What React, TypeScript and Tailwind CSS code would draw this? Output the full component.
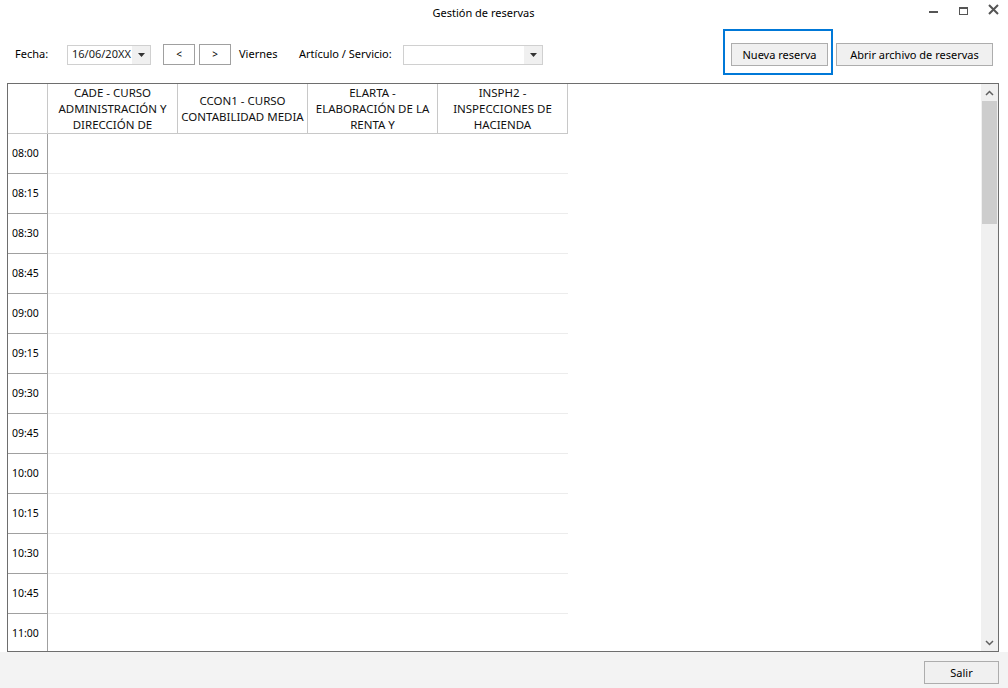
import React from "react";

const columns: string[][] = [
  ["CADE - CURSO", "ADMINISTRACIÓN Y", "DIRECCIÓN DE"],
  ["CCON1 - CURSO", "CONTABILIDAD MEDIA"],
  ["ELARTA -", "ELABORACIÓN DE LA", "RENTA Y"],
  ["INSPH2 -", "INSPECCIONES DE", "HACIENDA"],
];

const times = [
  "08:00", "08:15", "08:30", "08:45", "09:00", "09:15", "09:30",
  "09:45", "10:00", "10:15", "10:30", "10:45", "11:00",
];

function Caret() {
  return (
    <svg width="7" height="4" viewBox="0 0 7 4" className="fill-[#333]">
      <path d="M0 0h7L3.5 4z" />
    </svg>
  );
}

function Combo({ width, value }: { width: string; value?: string }) {
  return (
    <div className={`flex h-[20px] border border-[#d0d0d0] bg-white ${width}`}>
      <div className="flex-1 pl-[4px] text-[11px] leading-[16px] text-[#1a1a1a]">{value}</div>
      <div className="flex w-[18px] items-center justify-center bg-[#f0f0f0]">
        <Caret />
      </div>
    </div>
  );
}

function WinButton({ children, className }: { children: React.ReactNode; className: string }) {
  return (
    <button
      type="button"
      className={`block border border-[#adadad] bg-[#f0f0f0] text-[11px] leading-[16px] text-black ${className}`}
    >
      {children}
    </button>
  );
}

export default function App() {
  return (
    <div
      className="flex h-[688px] w-[1008px] flex-col overflow-hidden bg-white text-black"
      style={{ fontFamily: '"Noto Sans", "Open Sans", sans-serif' }}
    >
      {/* title bar */}
      <div className="flex h-[27px] items-start">
        <div className="flex flex-1 justify-center pl-[38px] pt-[5px] text-[11px] leading-[16px]">
          Gestión de reservas
        </div>
        <div className="flex items-start pr-[9px]">
          <div className="mr-[21px] mt-[11px] h-[2px] w-[9px] bg-[#555]" />
          <div className="mr-[20px] mt-[7px] h-[8px] w-[9px] border border-t-2 border-[#555]" />
          <svg width="11" height="11" viewBox="0 0 11 11" className="mt-[4px] stroke-[#555]">
            <path d="M1 1l9 9M10 1l-9 9" strokeWidth="2" />
          </svg>
        </div>
      </div>

      {/* toolbar */}
      <div className="flex h-[56px] items-start justify-between pl-[15px] pr-[15px]">
        <div className="mt-[17px] flex h-[21px] items-center text-[11px]">
          <span className="w-[52px]">Fecha:</span>
          <Combo width="w-[84px]" value="16/06/20XX" />
          <button
            type="button"
            className="ml-[12px] h-[21px] w-[32px] border border-[#a0a0a0] bg-white text-[10px]"
          >
            &lt;
          </button>
          <button
            type="button"
            className="ml-[4px] h-[21px] w-[32px] border border-[#a0a0a0] bg-white text-[10px]"
          >
            &gt;
          </button>
          <span className="ml-[8px] w-[60px]">Viernes</span>
          <span className="w-[104px]">Artículo / Servicio:</span>
          <Combo width="w-[140px]" />
        </div>
        <div className="flex items-start">
          <div className="mt-[2px] flex h-[46px] w-[110px] items-start border-2 border-[#0078d7] pl-[6px] pt-[12px]">
            <WinButton className="h-[23px] w-[97px]">Nueva reserva</WinButton>
          </div>
          <WinButton className="ml-[3px] mt-[16px] h-[23px] w-[157px]">
            Abrir archivo de reservas
          </WinButton>
        </div>
      </div>

      {/* schedule grid */}
      <div className="ml-[7px] flex h-[569px] w-[992px] overflow-hidden border border-[#6e6e6e]">
        <div className="flex-1 overflow-hidden">
          <div className="flex h-[50px]">
            <div className="w-[40px] border-b border-r border-[#c8c8c8]" />
            {columns.map((lines, i) => (
              <div
                key={i}
                className="flex w-[130px] flex-col items-center justify-center border-b border-r border-[#c8c8c8] text-center text-[11.5px] leading-[16px] text-[#111]"
              >
                {lines.map((l) => (
                  <span key={l}>{l}</span>
                ))}
              </div>
            ))}
          </div>
          {times.map((t) => (
            <div key={t} className="flex h-[40px]">
              <div className="flex w-[40px] shrink-0 items-center border-b border-r border-[#a0a0a0] pl-[4px] text-[10.5px]">
                {t}
              </div>
              <div className="w-[520px] border-b border-[#ececec]" />
            </div>
          ))}
        </div>
        <div className="flex w-[17px] flex-col bg-[#f0f0f0]">
          <div className="flex h-[17px] items-center justify-center">
            <svg width="9" height="6" viewBox="0 0 9 6" className="fill-none stroke-[#606060]">
              <path d="M1 5l3.5-3.5L8 5" strokeWidth="1.5" />
            </svg>
          </div>
          <div className="mx-[1px] h-[123px] bg-[#cdcdcd]" />
          <div className="flex-1" />
          <div className="flex h-[17px] items-center justify-center">
            <svg width="9" height="6" viewBox="0 0 9 6" className="fill-none stroke-[#606060]">
              <path d="M1 1l3.5 3.5L8 1" strokeWidth="1.5" />
            </svg>
          </div>
        </div>
      </div>

      {/* footer */}
      <div className="flex flex-1 items-start justify-end bg-[#f3f3f3] pr-[9px] pt-[9px]">
        <WinButton className="h-[23px] w-[75px]">Salir</WinButton>
      </div>
    </div>
  );
}
